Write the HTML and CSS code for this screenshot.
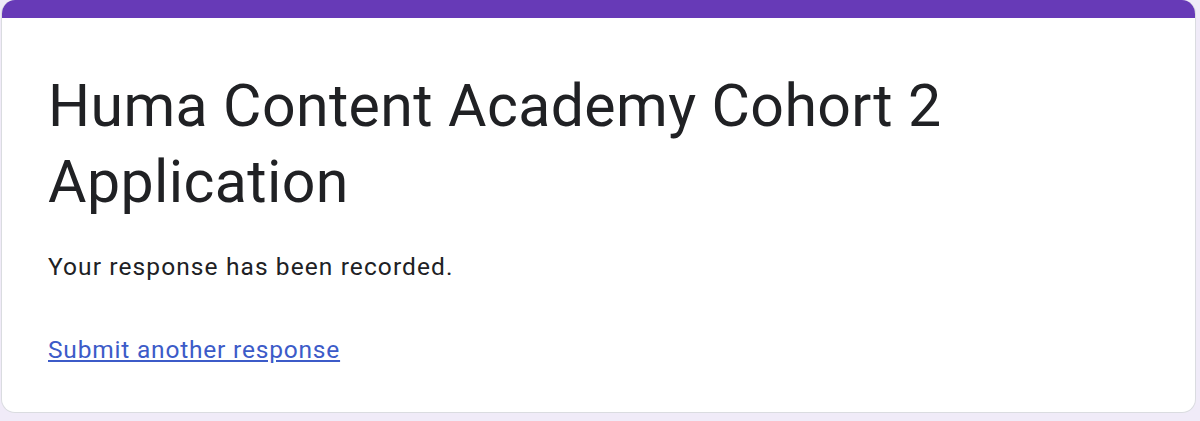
FILE: index.html
```html
<!DOCTYPE html>
<html lang="en">
<head>
    <meta charset="UTF-8">
    <meta name="viewport" content="width=device-width, initial-scale=1.0">
    <title>Huma Content Academy Cohort 2 Application</title>
    <link rel="stylesheet" href="styles.css">
</head>
<body>
    <div class="card">
        <div class="card-top"></div>
        <div class="card-body">
            <h1>Huma Content Academy Cohort 2 Application</h1>
            <p class="message">Your response has been recorded.</p>
            <a class="again" href="#">Submit another response</a>
        </div>
    </div>
</body>
</html>
```

FILE: styles.css
```css
* {
    margin: 0;
    padding: 0;
    box-sizing: border-box;
}

body {
    font-family: Roboto, 'Liberation Sans', sans-serif;
    background: #f0ebf8;
    color: #202124;
    padding: 0 4px 8px 1px;
}

.card {
    background: #fff;
    border: 1px solid #dadce0;
    border-top: none;
    border-radius: 14px;
    overflow: hidden;
    height: 413px;
}

.card-top {
    background: #673ab7;
    height: 18px;
}

.card-body {
    padding: 50px 46px 0;
}

h1 {
    font-size: 59px;
    font-weight: 400;
    line-height: 76px;
    letter-spacing: 0.4px;
    margin-right: 200px;
}

.message {
    font-size: 24.5px;
    letter-spacing: 1.1px;
    margin-top: 32px;
}

.again {
    display: inline-block;
    margin-top: 54px;
    font-size: 24.5px;
    letter-spacing: 0.8px;
    color: #3c5bc8;
}
```
